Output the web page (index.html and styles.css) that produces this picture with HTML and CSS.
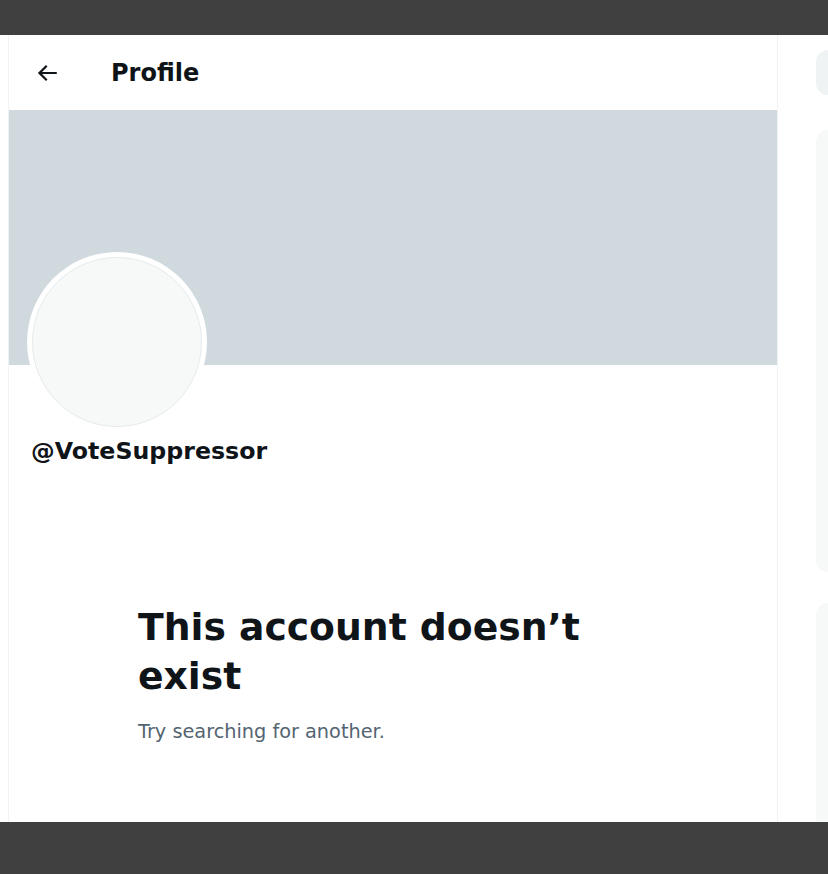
FILE: index.html
```html
<!DOCTYPE html>
<html>
<head>
<meta charset="utf-8">
<link rel="stylesheet" href="styles.css">
</head>
<body>
<div class="frame-top"></div>
<div class="page">
  <div class="gutter"></div>
  <main class="column">
    <header class="header">
      <span class="back">
        <svg viewBox="0 0 24 24" width="26" height="26"><path d="M7.414 13l5.043 5.04-1.414 1.42L3.586 12l7.457-7.46 1.414 1.42L7.414 11H21v2H7.414z" fill="#0f1419"/></svg>
      </span>
      <h1 class="title">Profile</h1>
    </header>
    <div class="banner"></div>
    <div class="avatar-row">
      <div class="avatar"><div class="avatar-inner"></div></div>
    </div>
    <div class="handle">@VoteSuppressor</div>
    <section class="empty">
      <h2 class="empty-title">This account doesn’t exist</h2>
      <p class="empty-sub">Try searching for another.</p>
    </section>
  </main>
  <aside class="side">
    <div class="search"></div>
    <div class="card card-1"></div>
    <div class="card card-2"></div>
  </aside>
</div>
<div class="frame-bottom"></div>
</body>
</html>
```
FILE: styles.css
```css
* { box-sizing: border-box; }
html, body { margin: 0; padding: 0; }
body {
  width: 828px;
  height: 874px;
  overflow: hidden;
  background: #ffffff;
  font-family: "DejaVu Sans", "Liberation Sans", Arial, sans-serif;
  color: #0f1419;
}
.frame-top { height: 35px; background: #404040; }
.frame-bottom { height: 52px; background: #404040; }
.page {
  display: flex;
  height: 787px;
  overflow: hidden;
}
.gutter { width: 8px; flex: none; }
.column {
  width: 770px;
  flex: none;
  border-left: 1px solid #eff3f4;
  border-right: 1px solid #eff3f4;
}
.header {
  height: 75px;
  display: flex;
  align-items: center;
  padding-left: 25px;
}
.back { width: 26px; height: 26px; display: flex; }
.title {
  margin: 0 0 0 51px;
  font-size: 24px;
  font-weight: 700;
}
.banner { height: 255px; background: #cfd9de; }
.avatar-row { padding-left: 18px; margin-top: -113px; }
.avatar {
  width: 180px;
  height: 180px;
  border-radius: 50%;
  background: #ffffff;
  padding: 5px;
}
.avatar-inner {
  width: 100%;
  height: 100%;
  border-radius: 50%;
  background: #f7f9f9;
  border: 1px solid #e6eaec;
}
.handle {
  margin-top: 4px;
  padding-left: 22px;
  font-size: 23.7px;
  font-weight: 700;
  line-height: 30px;
}
.empty { padding: 137px 0 0 129px; }
.empty-title {
  margin: 0;
  width: 470px;
  font-size: 37.7px;
  line-height: 49px;
  font-weight: 700;
}
.empty-sub {
  margin: 19px 0 0;
  font-size: 19.3px;
  color: #536471;
}
.side {
  flex: 1;
  padding: 15px 0 0 38px;
  display: flex;
  flex-direction: column;
}
.search {
  flex: none;
  height: 45px;
  border-radius: 24px 0 0 24px;
  background: #eff3f4;
}
.card { flex: none; background: #f7f9f9; border-radius: 20px 0 0 20px; }
.card-1 { margin-top: 35px; height: 442px; }
.card-2 { margin-top: 31px; height: 260px; }
```
